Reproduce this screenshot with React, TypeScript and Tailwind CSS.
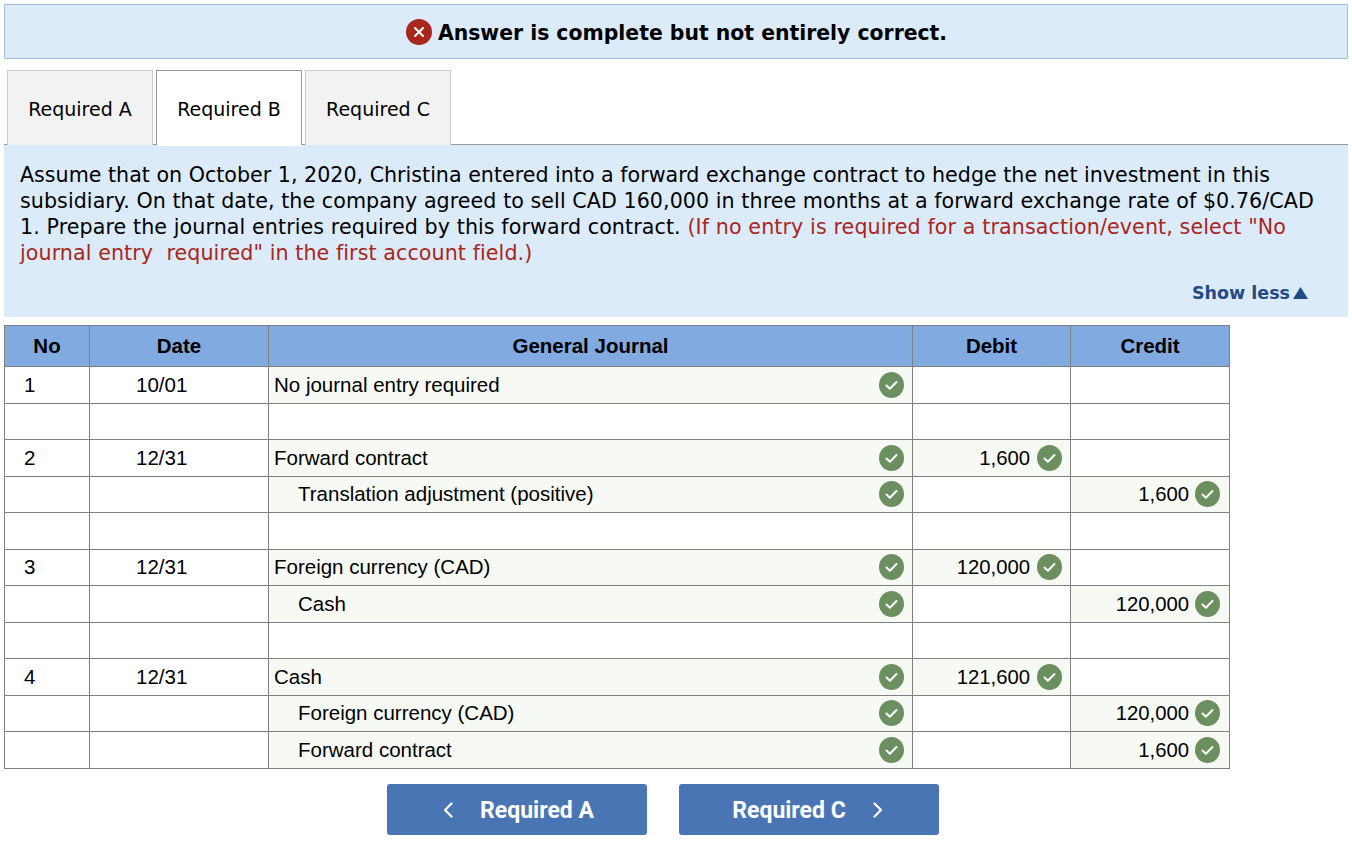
import React from "react";

type Row = { no?: string; date?: string; account?: string; indent?: boolean; debit?: string; credit?: string; lift?: boolean };

const rows: Row[] = [
  { no: "1", date: "10/01", account: "No journal entry required" },
  {},
  { no: "2", date: "12/31", account: "Forward contract", debit: "1,600" },
  { account: "Translation adjustment (positive)", indent: true, credit: "1,600", lift: true },
  {},
  { no: "3", date: "12/31", account: "Foreign currency (CAD)", debit: "120,000", lift: true },
  { account: "Cash", indent: true, credit: "120,000" },
  {},
  { no: "4", date: "12/31", account: "Cash", debit: "121,600" },
  { account: "Foreign currency (CAD)", indent: true, credit: "120,000", lift: true },
  { account: "Forward contract", indent: true, credit: "1,600" },
];

const Check = ({ lift }: { lift?: boolean }) => (
  <svg width="25" height="26" viewBox="0 0 25 26" className={`shrink-0 ${lift ? "-mt-[2px]" : ""}`}>
    <ellipse cx="12.5" cy="13" rx="12.5" ry="13" fill="#6b8f5e" />
    <path d="M7.5 13.5l3.4 3.2L17.5 10" fill="none" stroke="#fff" strokeWidth="2" strokeLinecap="round" strokeLinejoin="round" />
  </svg>
);

const Amount = ({ value, lift, credit }: { value?: string; lift?: boolean; credit?: boolean }) =>
  value ? (
    <td className="border border-[#808080] bg-[#f7f9f5] p-0">
      <div className={`flex items-center justify-end text-[20.3px] ${credit ? "gap-[6px] pr-[9px]" : "gap-[7px] pr-[8px]"}`}>
        <span>{value}</span>
        <Check lift={lift} />
      </div>
    </td>
  ) : (
    <td className="border border-[#808080] p-0" />
  );

export default function App() {
  return (
    <div className="min-h-[844px] bg-white px-[4px] pt-[4px] text-black font-['DejaVu_Sans',sans-serif]">
      <div className="flex h-[55px] items-center justify-center gap-[6px] border border-[#9dbfe0] bg-[#dcebf9] pl-[1px]">
        <svg width="26" height="26" viewBox="0 0 26 26">
          <circle cx="13" cy="13" r="13" fill="#a8261c" />
          <path d="M9 9l8 8M17 9l-8 8" stroke="#fff" strokeWidth="2" strokeLinecap="round" />
        </svg>
        <span className="relative top-[2px] text-[20.4px] font-bold">Answer is complete but not entirely correct.</span>
      </div>

      <div className="mt-[11px] flex h-[75px] gap-[3px] border-b border-[#999] pl-[3px] text-[19px]">
        <div className="flex h-[75px] w-[146px] items-center justify-center border border-b-0 border-[#ccc] bg-[#f2f2f2] pt-[3px]">Required A</div>
        <div className="relative flex h-[75px] w-[146px] items-center justify-center border border-b-0 border-[#999] bg-white pt-[3px] after:absolute after:left-0 after:right-0 after:top-full after:h-[1px] after:bg-white">Required B</div>
        <div className="flex h-[75px] w-[146px] items-center justify-center border border-b-0 border-[#ccc] bg-[#f2f2f2] pt-[3px]">Required C</div>
      </div>

      <div className="h-[172px] bg-[#dcebf9] pl-[16px] pr-[10px] pt-[17px] text-[20.63px] leading-[26px] whitespace-nowrap">
        <p>Assume that on October 1, 2020, Christina entered into a forward exchange contract to hedge the net investment in this</p>
        <p className="tracking-[0.06px]">subsidiary. On that date, the company agreed to sell CAD 160,000 in three months at a forward exchange rate of $0.76/CAD</p>
        <p className="tracking-[0.09px]">
          1. Prepare the journal entries required by this forward contract.{" "}
          <span className="tracking-[0.11px] text-[#a8261c]">(If no entry is required for a transaction/event, select "No</span>
        </p>
        <p className="tracking-[0.08px] text-[#a8261c]">journal entry&nbsp; required" in the first account field.)</p>
        <div className="mt-[14px] flex items-center justify-end gap-[3px] pr-[30px] text-[17.5px] font-bold leading-[26px] text-[#234a84]">
          <span>Show less</span>
          <svg width="15" height="12" viewBox="0 0 15 12">
            <path d="M7.5 0L15 12H0z" fill="#234a84" />
          </svg>
        </div>
      </div>

      <table className="mt-[8px] w-[1226px] table-fixed border-collapse font-['Liberation_Sans',sans-serif] text-[20.5px]">
        <colgroup>
          <col className="w-[85px]" />
          <col className="w-[179px]" />
          <col className="w-[644px]" />
          <col className="w-[158px]" />
          <col className="w-[159px]" />
        </colgroup>
        <thead>
          <tr className="h-[41px] bg-[#81aae0] font-bold">
            {["No", "Date", "General Journal", "Debit", "Credit"].map((h) => (
              <th key={h} className="border border-[#808080] p-0 text-center font-bold">
                {h}
              </th>
            ))}
          </tr>
        </thead>
        <tbody>
          {rows.map((row, i) => (
            <tr key={i} className={i % 2 === 0 ? "h-[37px]" : "h-[36px]"}>
              <td className="border border-[#808080] p-0 pl-[19px]">{row.no}</td>
              <td className="border border-[#808080] p-0 pl-[46px]">{row.date}</td>
              {row.account ? (
                <td className="border border-[#808080] bg-[#f7f9f5] p-0">
                  <div className={`flex items-center justify-between pr-[8px] ${row.indent ? "pl-[29px]" : "pl-[5px]"}`}>
                    <span>{row.account}</span>
                    <Check lift={row.lift} />
                  </div>
                </td>
              ) : (
                <td className="border border-[#808080] p-0" />
              )}
              <Amount value={row.debit} lift={row.lift} />
              <Amount value={row.credit} lift={row.lift} credit />
            </tr>
          ))}
        </tbody>
      </table>

      <div className="mt-[15px] flex gap-[32px] pl-[383px] font-['Roboto',sans-serif] text-[23px] font-bold text-white">
        <div className="flex h-[51px] w-[260px] items-center justify-center gap-[26px] rounded-[3px] bg-[#4a75b5] pl-[2px]">
          <svg width="12" height="16" viewBox="0 0 12 16" fill="none" stroke="#fff" strokeWidth="2.2" strokeLinecap="round" strokeLinejoin="round">
            <path d="M9.5 1.5L3 8l6.5 6.5" />
          </svg>
          <span className="relative top-[2px]">Required A</span>
        </div>
        <div className="flex h-[51px] w-[260px] items-center justify-center gap-[26px] rounded-[3px] bg-[#4a75b5] pr-[2px]">
          <span className="relative top-[2px]">Required C</span>
          <svg width="12" height="16" viewBox="0 0 12 16" fill="none" stroke="#fff" strokeWidth="2.2" strokeLinecap="round" strokeLinejoin="round">
            <path d="M2.5 1.5L9 8l-6.5 6.5" />
          </svg>
        </div>
      </div>
    </div>
  );
}
